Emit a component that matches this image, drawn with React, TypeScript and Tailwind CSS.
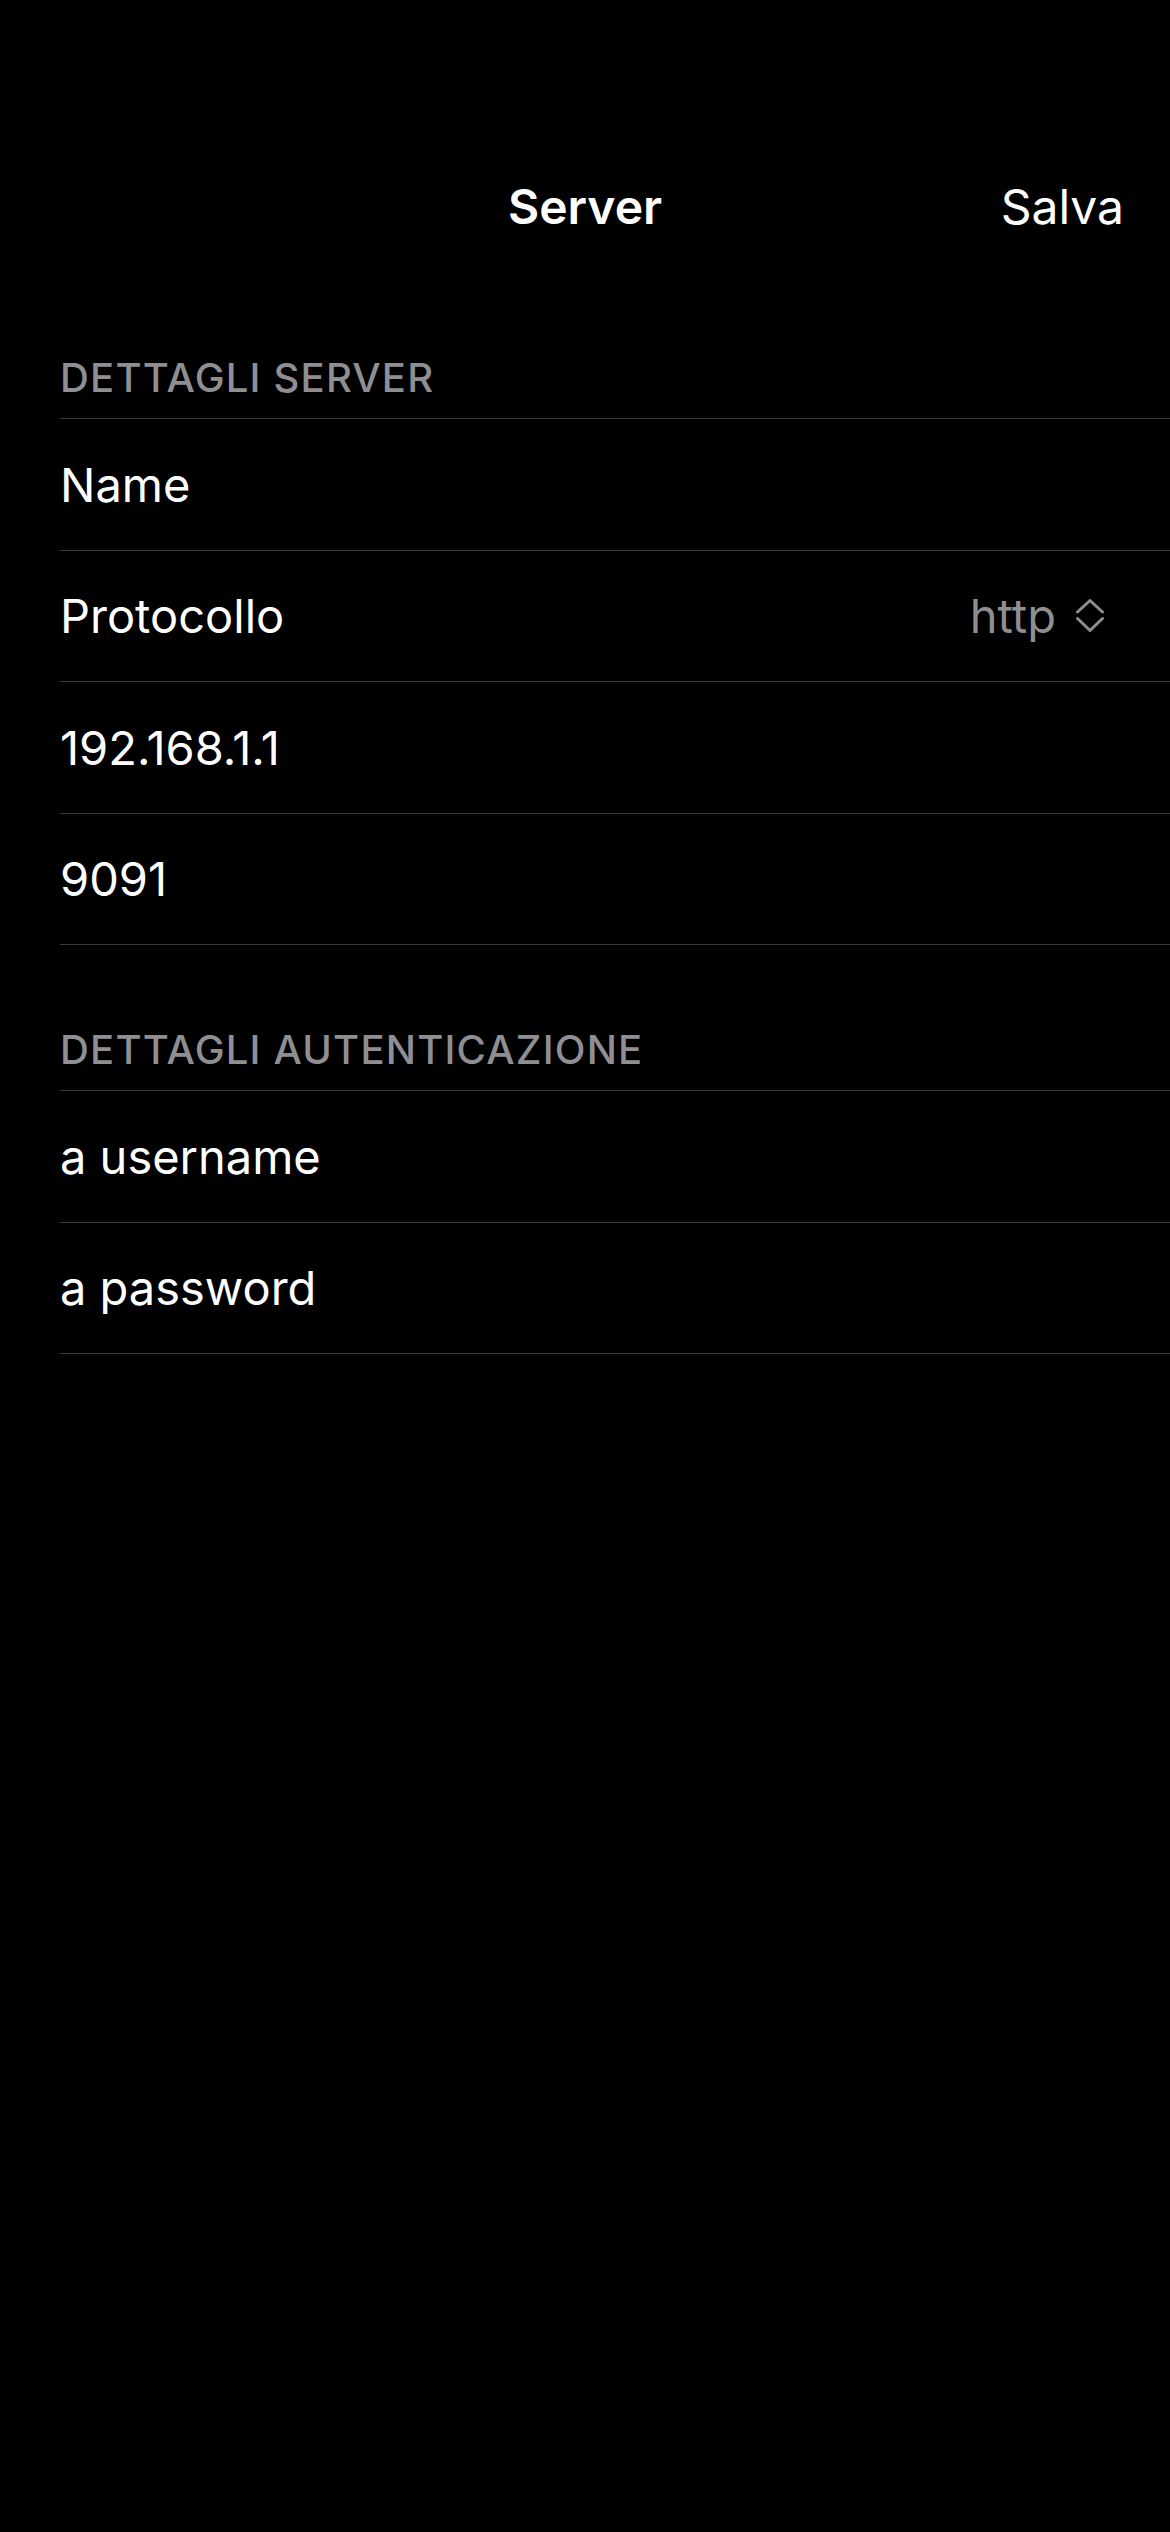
const font = { fontFamily: 'Inter, "Noto Sans", sans-serif' };

function UpDown() {
  return (
    <svg width="28" height="33" viewBox="0 0 28 33" fill="none" stroke="#8e8e93" strokeWidth="3" strokeLinecap="round" strokeLinejoin="round">
      <path d="M1.5 13 L14 1.5 L26.5 13" />
      <path d="M1.5 19.5 L14 31.5 L26.5 19.5" />
    </svg>
  );
}

function Row({ children, right }: { children: React.ReactNode; right?: React.ReactNode }) {
  return (
    <div className="flex h-[131.5px] items-center justify-between border-b border-[#3a3a3c] pr-[66px]">
      <span className="text-[47px] leading-none text-white">{children}</span>
      {right}
    </div>
  );
}

function SectionHeader({ title }: { title: string }) {
  return (
    <div className="flex h-[145px] items-end pb-[20px] pl-[60px]">
      <span className="text-[40px] font-medium uppercase leading-none tracking-[1.2px] text-[#8e8e93]">{title}</span>
    </div>
  );
}

export default function App() {
  return (
    <div className="min-h-[2532px] w-full bg-black text-white" style={font}>
      <div className="h-[141px]" />
      <div className="relative flex h-[132px] items-center justify-center">
        <span className="text-[48px] font-semibold leading-none">Server</span>
        <button className="absolute right-[46px] top-0 flex h-full items-center text-[48px] leading-none text-white">Salva</button>
      </div>

      <SectionHeader title="Dettagli server" />
      <div className="ml-[60px] border-t border-[#3a3a3c]">
        <Row>Name</Row>
        <Row
          right={
            <div className="flex items-center gap-[20px]">
              <span className="text-[47px] leading-none text-[#8e8e93]">http</span>
              <UpDown />
            </div>
          }
        >
          Protocollo
        </Row>
        <Row>192.168.1.1</Row>
        <Row>9091</Row>
      </div>

      <SectionHeader title="Dettagli autenticazione" />
      <div className="ml-[60px] border-t border-[#3a3a3c]">
        <Row>a username</Row>
        <Row>a password</Row>
      </div>
    </div>
  );
}
